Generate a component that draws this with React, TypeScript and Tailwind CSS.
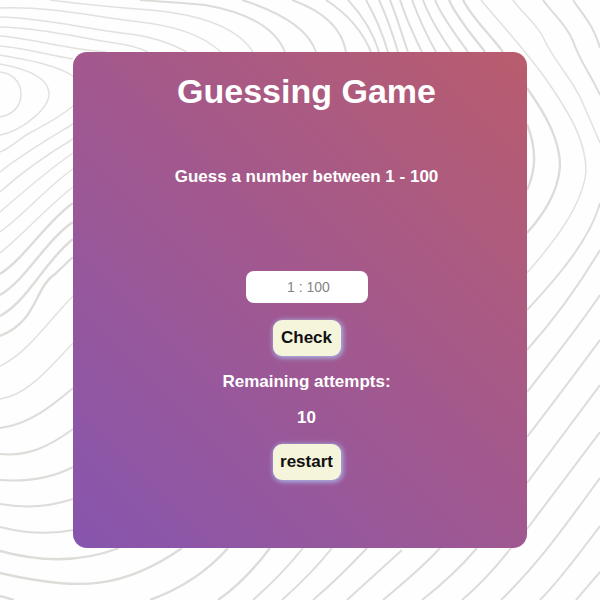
import { useState } from "react";

const thinContours = [
  "M0 72 C12 73 21 82 21 94 C21 107 12 115 0 117",
  "M0 64 C22 68 48 76 49 93 C50 108 22 131 0 135",
  "M0 55 C25 60 55 64 73 76 L80 92 L73 106 C55 121 38 128 28 134 C18 140 10 148 0 152",
  "M0 46 C25 48 48 55 73 59",
  "M0 36 C30 38 65 49 106 52",
  "M0 27 C45 28 90 40 115 43 C128 45 140 48 148 52",
  "M0 17 C45 18 85 29 130 34 C155 37 174 45 187 52",
  "M0 8 C50 6 90 16 140 22 C172 26 200 33 221 52",
  "M50 0 C80 4 110 7 150 10 C195 14 236 25 253 52",
  "M0 172 C24 153 50 138 73 124",
  "M0 192 C24 170 48 154 73 139",
  "M0 212 C22 193 48 170 73 153",
  "M0 232 C24 215 48 186 73 169",
  "M0 253 C24 234 48 206 73 187",
  "M481 0 C500 23 530 55 550 85 C573 119 586 143 586 172 C582 207 553 243 527 273",
  "M513 0 C522 13 535 22 543 37 C553 60 570 76 581 99 L600 143",
  "M0 366 C28 353 50 319 73 296",
  "M0 399 C28 395 50 367 73 343",
];

const contours = [
  "M140 0 C165 2 188 3 205 5 C245 12 275 27 285 52",
  "M242 0 C280 12 308 28 316 52",
  "M292 0 C323 11 342 28 346 52",
  "M326 0 C346 13 362 30 371 52",
  "M348 0 C362 15 373 32 379 52",
  "M366 0 C375 16 383 35 388 52",
  "M379 0 C387 17 393 35 398 52",
  "M390 0 C397 17 402 35 408 52",
  "M400 0 C406 18 414 36 422 52",
  "M412 0 C419 19 427 36 436 52",
  "M423 0 C430 19 441 36 452 52",
  "M435 0 C443 19 457 36 468 52",
  "M543 0 C552 13 566 24 573 41 C580 62 590 73 600 95",
  "M573 0 C582 14 594 25 600 48",
  "M600 203 C590 240 556 279 527 310",
  "M600 250 C578 287 552 322 527 350",
  "M600 295 C577 329 550 363 527 392",
  "M600 340 C577 371 550 407 527 437",
  "M600 385 C577 416 550 452 527 483",
  "M600 432 C577 463 550 498 527 529 L511 548 C500 562 482 583 462 600",
  "M600 478 C570 519 540 562 501 600",
  "M600 526 C580 552 562 578 540 600",
  "M600 572 L576 600",
  "M477 548 C460 568 444 583 422 600",
  "M440 548 C422 568 403 583 383 600",
  "M402 550 L347 600",
  "M367 548 C350 566 332 584 313 600",
  "M332 548 C317 567 300 584 282 600",
  "M303 548 C288 567 270 585 253 600",
  "M0 428 C28 425 52 406 73 388",
  "M0 454 C28 457 50 446 73 429",
  "M0 480 C28 482 52 478 73 467",
  "M0 504 C28 509 52 506 73 499",
  "M0 527 C28 534 54 534 73 530",
];

const boldContours = [
  "M0 274 C26 257 46 222 73 203",
  "M0 295 C26 280 45 241 73 222",
  "M0 316 C28 301 44 262 73 239",
  "M0 336 C38 321 34 288 55 274 L73 257",
  "M449 0 C457 18 472 35 485 52",
  "M463 0 C472 18 489 33 503 52",
  "M527 88 C546 115 560 140 560 166 C558 194 542 216 527 233",
  "M527 124 C537 150 536 170 527 190",
  "M0 551 C40 562 80 563 119 548",
  "M0 573 C80 592 125 588 182 548",
  "M0 596 L14 600",
  "M150 600 C180 589 206 573 228 548",
  "M270 548 C255 568 238 586 218 600",
];

function ContourBackground() {
  return (
    <svg
      aria-hidden="true"
      viewBox="0 0 600 600"
      preserveAspectRatio="xMidYMid slice"
      className="fixed inset-0 -z-10 h-full w-full"
      fill="none"
      stroke="#dddcd9"
    >
      <g strokeWidth="1.5" stroke="#e2e1de">
        {thinContours.map((d) => (
          <path key={d} d={d} />
        ))}
      </g>
      <g strokeWidth="2">
        {contours.map((d) => (
          <path key={d} d={d} />
        ))}
      </g>
      <g strokeWidth="2.4">
        {boldContours.map((d) => (
          <path key={d} d={d} />
        ))}
      </g>
    </svg>
  );
}

const buttonClass =
  "h-9 w-17 rounded-[9px] bg-[#f5f5dc] text-[17px] leading-5 font-bold text-[#111111] shadow-[1px_1px_5px_1px_#a9b8e8]";

export default function App() {
  const [guess, setGuess] = useState("");
  const [target, setTarget] = useState(() => Math.ceil(Math.random() * 100));
  const [attempts, setAttempts] = useState(10);
  const [message, setMessage] = useState("Guess a number between 1 - 100");

  const check = () => {
    const value = Number(guess);
    if (!value || attempts === 0) return;
    setAttempts(attempts - 1);
    setMessage(value === target ? "Correct!" : value < target ? "Too low" : "Too high");
  };

  const restart = () => {
    setGuess("");
    setTarget(Math.ceil(Math.random() * 100));
    setAttempts(10);
    setMessage("Guess a number between 1 - 100");
  };

  return (
    <div className="isolate min-h-screen bg-[#fefefe] px-[73px] py-[52px] font-['Liberation_Sans',Arial,sans-serif]">
      <ContourBackground />
      <main className="flex flex-col items-center rounded-[14px] bg-linear-45 from-[#8755ae] via-[#a1588f] to-[#b95c6d] pt-[19px] pb-[68px] pl-[13px] text-center text-[17px] leading-5 font-bold text-white">
        <h1 className="text-[34px] leading-10">Guessing Game</h1>
        <p className="mt-14">{message}</p>
        <input
          type="text"
          inputMode="numeric"
          aria-label="Your guess"
          placeholder="1 : 100"
          value={guess}
          onChange={(e) => setGuess(e.target.value)}
          className="mt-[84px] h-8 w-[122px] rounded-[8px] bg-white pl-1 text-center text-sm font-normal text-black placeholder:text-[#858585]"
        />
        <button type="button" onClick={check} className={`mt-[17px] ${buttonClass}`}>
          Check
        </button>
        <p className="mt-4">Remaining attempts:</p>
        <p className="mt-4">{attempts}</p>
        <button type="button" onClick={restart} className={`mt-4 ${buttonClass}`}>
          restart
        </button>
      </main>
    </div>
  );
}
